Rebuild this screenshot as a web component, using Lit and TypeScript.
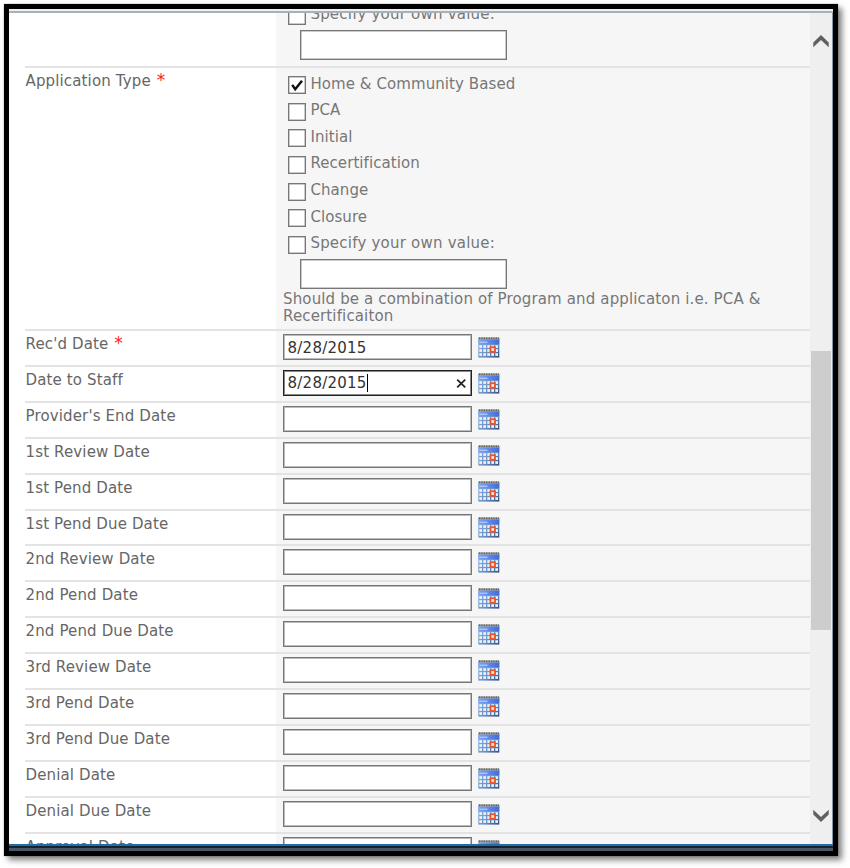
import { LitElement, html, css, svg, nothing } from "lit";
import { customElement } from "lit/decorators.js";

const INK = css`
  :host { font-family: "DejaVu Sans", sans-serif; font-size: 15px; line-height: 18px; }
`;

@customElement("calendar-icon")
class CalendarIcon extends LitElement {
  static styles = css`
    :host { display: block; width: 22px; height: 21px; }
    svg { display: block; }
  `;
  render() {
    const cols = [1, 5, 9, 13, 17];
    const rows = [8.2, 12.2, 16.2];
    return html`<svg width="22" height="21" viewBox="0 0 22 21">
      <defs>
        <linearGradient id="head" x1="0" x2="1" y1="0" y2="0">
          <stop offset="0" stop-color="#7fa5f3" /><stop offset="1" stop-color="#416bdc" />
        </linearGradient>
        <linearGradient id="grid" x1="0" x2="1" y1="0" y2="1">
          <stop offset="0" stop-color="#8fb4e0" /><stop offset="0.6" stop-color="#6f93c6" /><stop offset="1" stop-color="#34507f" />
        </linearGradient>
      </defs>
      <rect x="0.3" y="1" width="21" height="19.6" fill="url(#grid)" />
      <rect x="0.3" y="2" width="21" height="5.3" fill="url(#head)" />
      <rect x="1.5" y="4.6" width="8" height="1.4" fill="#a9c4fa" />
      <rect x="0.3" y="0.3" width="21" height="2.2" fill="#a5a498" />
      <path d="M1 1.2H21" stroke="#5d5e58" stroke-width="1.6" stroke-dasharray="1.2 1.2" />
      ${rows.map((y) => cols.map((x) => svg`<rect x=${x + 0.3} y=${y} width="2.7" height="2.7" fill="#eaf3fd" />`))}
      <rect x="12.4" y="10.2" width="4.6" height="4.6" fill="#ffe3d6" stroke="#ec5527" stroke-width="1.8" />
    </svg>`;
  }
}

@customElement("check-option")
class CheckOption extends LitElement {
  static properties = { label: {}, checked: { type: Boolean }, wide: { type: Boolean } };
  declare label: string;
  declare checked: boolean;
  declare wide: boolean;
  static styles = [INK, css`
    :host { display: flex; height: 26.6px; align-items: flex-start; color: #777; }
    .box { box-sizing: border-box; width: 18px; height: 18px; border: 1px solid #777; box-shadow: inset 0 0 0 0.5px #999; background: #fff; flex: none; }
    .box svg { display: block; }
    .text { margin: -1.5px 0 0 4px; letter-spacing: 0.08px; white-space: nowrap; }
    .wide { letter-spacing: 0.22px; }
  `];
  render() {
    return html`<div class="box">${this.checked
      ? html`<svg width="16" height="16" viewBox="0 0 16 16"><path d="M3.2 7.9 L6.2 12.2 L13 3.8" fill="none" stroke="#111" stroke-width="2.5" /></svg>`
      : nothing}</div><div class="text ${this.wide ? "wide" : ""}">${this.label}</div>`;
  }
}

interface DateField { label: string; required?: boolean; value?: string; active?: boolean; }

const DATES: DateField[] = [
  { label: "Rec'd Date", required: true, value: "8/28/2015" },
  { label: "Date to Staff", value: "8/28/2015", active: true },
  ...["Provider's End Date", "1st Review Date", "1st Pend Date", "1st Pend Due Date",
    "2nd Review Date", "2nd Pend Date", "2nd Pend Due Date", "3rd Review Date",
    "3rd Pend Date", "3rd Pend Due Date", "Denial Date", "Denial Due Date",
    "Approval Date"].map((label) => ({ label })),
];

const OWN = "Specify your own value:";
const TYPES = ["Home & Community Based", "PCA", "Initial", "Recertification", "Change", "Closure", OWN];

@customElement("app-root")
class AppRoot extends LitElement {
  static styles = [INK, css`
    :host { display: block; width: 850px; height: 868px; overflow: hidden; background: #fff; box-sizing: border-box; padding: 4px; }
    .frame { box-sizing: border-box; width: 834px; height: 852px; border: 5px solid #000; box-shadow: 4px 4px 6px rgba(0,0,0,.5), 0 0 1px #777; display: flex; flex-direction: column; }
    .topline { height: 2px; background: #edf0f1; border-bottom: 2px solid #a9b1b7; flex: none; }
    .view { height: 831px; overflow: hidden; display: flex; border-right: 1px solid #8398a6; }
    .bottom { flex: 1; background: #4b5765; border-top: 2px solid #1f6ea7; }
    .bottom::before { content: ""; display: block; height: 2px; background: #17232f; }
    .form { width: 785px; margin-left: 16px; flex: none; }
    .row { display: flex; box-sizing: border-box; border-top: 2px solid #e3e3e3; }
    .first { height: 59.2px; margin-top: -6.2px; border-top: 0; }
    .types { height: 263.1px; }
    .date { height: 35.9px; }
    .name { width: 251px; flex: none; color: #666; letter-spacing: 0.14px; padding: 4px 0 0 .5px; white-space: nowrap; box-sizing: border-box; }
    .req { color: #f22; font-size: 17px; line-height: 10px; margin-left: 1px; }
    .field { flex: 1; background: #f6f6f6; box-sizing: border-box; padding-left: 7px; }
    .options { padding-left: 5.4px; }
    .types .options { padding-top: 8.2px; }
    .own { box-sizing: border-box; width: 207px; height: 30px; margin: -3.4px 0 0 12px; border: 1px solid #777; box-shadow: inset 0 0 0 .5px #999; background: #fff; }
    .types .own { margin-top: -3.8px; }
    .hint { color: #777; line-height: 17px; letter-spacing: 0.14px; margin-top: 2.6px; white-space: nowrap; }
    .date .field { display: flex; padding-top: 3px; }
    .input { box-sizing: border-box; width: 189px; height: 26px; border: 1px solid #777; box-shadow: inset 0 0 0 1px #bbb; background: #fff; display: flex; align-items: center; padding: 1px 4px 0 3.5px; color: #333; letter-spacing: .25px; }
    .active { border-color: #222; box-shadow: inset 0 0 0 1px #888; }
    .caret { width: 1px; height: 18px; background: #000; }
    .clear { margin: 0 0 0 auto; display: block; }
    calendar-icon { margin: 3px 0 0 6px; }
    .scroll { flex: 1; background: #efefef; display: flex; flex-direction: column; align-items: center; }
    .up { margin-top: 21px; flex: none; }
    .thumb { width: 20px; height: 279px; background: #cdcdcd; margin-top: 303px; flex: none; }
    .down { margin-top: 179px; flex: none; }
  `];

  private dateRow(d: DateField) {
    return html`<div class="row date">
      <div class="name">${d.label}${d.required ? html` <span class="req">*</span>` : nothing}</div>
      <div class="field">
        <div class="input ${d.active ? "active" : ""}">${d.value ?? nothing}${d.active
          ? html`<span class="caret"></span><svg class="clear" width="11" height="11" viewBox="0 0 11 11"><path d="M1.2 1.7L9.2 9.3M9.2 1.7L1.2 9.3" stroke="#222" stroke-width="1.8" /></svg>`
          : nothing}</div>
        <calendar-icon></calendar-icon>
      </div>
    </div>`;
  }

  render() {
    return html`<div class="frame">
      <div class="topline"></div>
      <div class="view">
        <div class="form">
          <div class="row first">
            <div class="name"></div>
            <div class="field"><div class="options">
              <check-option .label=${OWN} .wide=${true}></check-option>
              <div class="own"></div>
            </div></div>
          </div>
          <div class="row types">
            <div class="name">Application Type <span class="req">*</span></div>
            <div class="field">
              <div class="options">
                ${TYPES.map((t, i) => html`<check-option .label=${t} .checked=${i === 0} .wide=${t === OWN}></check-option>`)}
                <div class="own"></div>
              </div>
              <div class="hint">Should be a combination of Program and applicaton i.e. PCA &amp;<br />Recertificaiton</div>
            </div>
          </div>
          ${DATES.map((d) => this.dateRow(d))}
        </div>
        <div class="scroll">
          <svg class="up" width="16" height="14" viewBox="0 0 16 14"><path d="M0.3 8.4L8 1L15.7 8.4V13.2L8 6L0.3 13.2Z" fill="#606060" /></svg>
          <div class="thumb"></div>
          <svg class="down" width="16" height="14" viewBox="0 0 16 14"><path d="M0.3 .8L8 8L15.7 .8V5.6L8 13L0.3 5.6Z" fill="#606060" /></svg>
        </div>
      </div>
      <div class="bottom"></div>
    </div>`;
  }
}
